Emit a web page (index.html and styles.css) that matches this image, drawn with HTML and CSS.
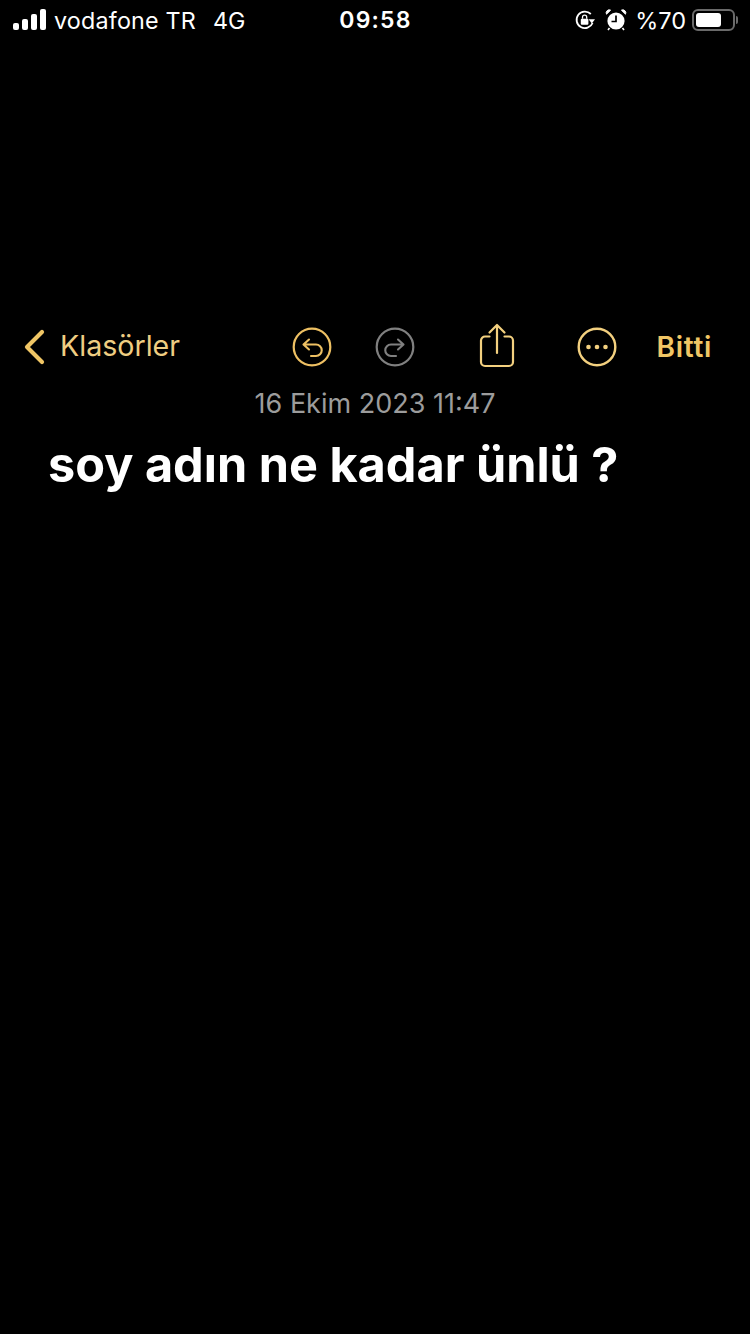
FILE: index.html
```html
<!DOCTYPE html>
<html lang="tr">
<head>
<meta charset="utf-8">
<title>Notlar</title>
<link rel="stylesheet" href="styles.css">
</head>
<body>
<div class="screen">
  <header class="status">
    <div class="status-left">
      <svg class="signal" width="34" height="22" viewBox="0 0 34 22"><rect x="0" y="14" width="6" height="7" rx="2"/><rect x="9" y="10" width="6" height="11" rx="2"/><rect x="18" y="5" width="6" height="16" rx="2"/><rect x="27" y="0" width="6" height="21" rx="2"/></svg>
      <span class="carrier">vodafone TR</span>
      <span class="net">4G</span>
    </div>
    <div class="clock">09:58</div>
    <div class="status-right">
      <svg class="ico-lock" width="22" height="22" viewBox="0 0 22 22" fill="none"><path d="M18.600 14A8.300 8.300 0 1 1 16.800 5" stroke="#fff" stroke-width="1.800"/><path d="M14.600 10.200h6.400l-3.200 4.200z" fill="#fff"/><rect x="6.800" y="9.800" width="7.600" height="6" rx="1" fill="#fff"/><path d="M8.500 9.800V8.300a2.100 2.100 0 0 1 4.200 0v1.500" stroke="#fff" stroke-width="1.300"/></svg>
      <svg class="ico-alarm" width="22" height="24" viewBox="0 0 22 24" fill="none"><circle cx="11" cy="13" r="8.600" fill="#fff"/><path d="M11 7.500V13.500H6.500" stroke="#000" stroke-width="1.700"/><path d="M1.500 6.200 5.600 2.200A3 3 0 0 0 1.500 6.200zM20.500 6.200 16.400 2.200A3 3 0 0 1 20.500 6.200z" fill="#fff" stroke="#fff"/><path d="M4.500 20 3 22M17.500 20 19 22" stroke="#fff" stroke-width="1.600"/></svg>
      <span class="pct">%70</span>
      <div class="battery"><div class="battery-body"><div class="battery-fill"></div></div><div class="battery-cap"></div></div>
    </div>
  </header>

  <nav class="toolbar">
    <div class="back">
      <svg width="22" height="36" viewBox="0 0 22 36" fill="none"><path d="M19 3 4 18l15 15" stroke="#f0c665" stroke-width="4.200" stroke-linecap="round" stroke-linejoin="round"/></svg>
      <span class="back-label">Klasörler</span>
    </div>
    <div class="tools">
      <svg class="tool undo" width="40" height="40" viewBox="0 0 40 40" fill="none"><circle cx="20" cy="20" r="18.300" stroke="#eec063" stroke-width="2.200"/><path d="M17 12.500 11.500 17.500l5.500 5M12 17.500h12a5.700 5.700 0 0 1 0 11.500h-5" stroke="#eec063" stroke-width="2.100" stroke-linecap="round" stroke-linejoin="round"/></svg>
      <svg class="tool redo" width="40" height="40" viewBox="0 0 40 40" fill="none"><circle cx="20" cy="20" r="18.300" stroke="#808080" stroke-width="2.200"/><path d="M23 12.500 28.500 17.500l-5.500 5M28 17.500H16a5.700 5.700 0 0 0 0 11.500h5" stroke="#808080" stroke-width="2.100" stroke-linecap="round" stroke-linejoin="round"/></svg>
      <svg class="tool share" width="36" height="46" viewBox="0 0 36 46" fill="none"><path d="M10.500 14.500H6a4 4 0 0 0-4 4V40a4 4 0 0 0 4 4h24a4 4 0 0 0 4-4V18.500a4 4 0 0 0-4-4h-4.500" stroke="#f3d07f" stroke-width="2.200" stroke-linecap="round"/><path d="M18 31V3.500M10.500 10.500 18 3l7.500 7.500" stroke="#f3d07f" stroke-width="2.200" stroke-linecap="round" stroke-linejoin="round"/></svg>
      <svg class="tool more" width="40" height="40" viewBox="0 0 40 40" fill="none"><circle cx="20" cy="20" r="18.300" stroke="#f3d07f" stroke-width="2.400"/><circle cx="11.500" cy="20" r="2.300" fill="#f3d07f"/><circle cx="20" cy="20" r="2.300" fill="#f3d07f"/><circle cx="28.500" cy="20" r="2.300" fill="#f3d07f"/></svg>
      <span class="done">Bitti</span>
    </div>
  </nav>

  <main class="note">
    <p class="date">16 Ekim 2023 11:47</p>
    <h1 class="title">soy adın ne kadar ünlü ?</h1>
  </main>
</div>
</body>
</html>
```
FILE: styles.css
```css
* { box-sizing: border-box; }
html, body { margin: 0; padding: 0; background: #000; }
.screen {
  width: 750px;
  height: 1334px;
  overflow: hidden;
  background: #000;
  font-family: Inter, "Liberation Sans", sans-serif;
  color: #fff;
}
.status {
  display: grid;
  grid-template-columns: 1fr auto 1fr;
  align-items: center;
  height: 40px;
  padding: 0 12px 0 13px;
}
.status-left { display: flex; align-items: center; }
.signal { fill: #fff; margin-right: 7px; }
.carrier { font-size: 23.300px; letter-spacing: 0.200px; }
.net { font-size: 23.300px; margin-left: 17px; }
.clock { font-size: 23px; font-weight: 600; letter-spacing: 1.200px; }
.status-right { display: flex; align-items: center; justify-content: flex-end; }
.ico-lock { margin-right: 9px; }
.ico-alarm { margin-right: 8px; }
.pct { font-size: 23.500px; margin-right: 6px; }
.battery { display: flex; align-items: center; }
.battery-body {
  width: 43px;
  height: 22px;
  border: 2px solid #6a6a6a;
  border-radius: 6px;
  padding: 2px;
}
.battery-fill { width: 25px; height: 14px; background: #fff; border-radius: 3px; }
.battery-cap { width: 2px; height: 8px; margin-left: 1px; background: #6a6a6a; border-radius: 0 2px 2px 0; }

.toolbar {
  display: flex;
  align-items: center;
  justify-content: space-between;
  height: 54px;
  margin-top: 280px;
  padding: 0 38px 0 23px;
}
.back { display: flex; align-items: center; gap: 15px; }
.back-label { font-size: 28.600px; line-height: 32px; margin-top: -2px; color: #efcd82; }
.tools { display: flex; align-items: center; }
.tool { display: block; flex: none; }
.undo { margin-right: 43px; }
.redo { margin-right: 64px; }
.share { margin-right: 62px; margin-top: -4px; }
.more { margin-right: 39px; }
.done { font-size: 28px; font-weight: 600; color: #f0c665; letter-spacing: 0.700px; }

.note { display: flex; flex-direction: column; }
.date {
  margin: 14px 0 0;
  text-align: center;
  font-size: 27px;
  line-height: 32px;
  color: #9c9c9c;
}
.title {
  margin: 17px 0 0;
  padding-left: 48px;
  font-size: 48.600px;
  line-height: 56px;
  font-weight: 700;
  color: #fff;
}
```
